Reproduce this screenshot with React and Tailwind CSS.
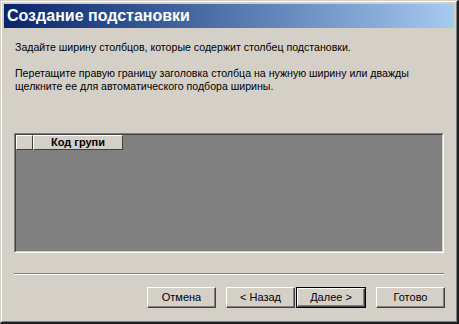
import React from 'react';

const font = { fontFamily: '"Liberation Sans", Arial, sans-serif' };

const Button = ({ children, isDefault, className = '' }) => {
  const inner = (
    <div className="h-full w-full border-t border-l border-t-white border-l-white border-r border-b border-r-[#404040] border-b-[#404040] shadow-[inset_-1px_-1px_0_#808080] flex items-center justify-center text-[11px] text-black">
      {children}
    </div>
  );
  if (isDefault) {
    return <div className={`h-[21px] border border-black ${className}`}>{inner}</div>;
  }
  return <div className={`h-[21px] ${className}`}>{inner}</div>;
};

export default function App() {
  return (
    <div
      className="w-[459px] h-[324px] bg-[#d4d0c8] border-t border-l border-t-[#d4d0c8] border-l-[#d4d0c8] border-r-2 border-b-2 border-r-[#202020] border-b-[#202020] overflow-hidden"
      style={font}
    >
      <div className="h-full border-t border-l border-t-white border-l-white border-r border-b border-r-[#808080] border-b-[#808080] p-[2px] flex flex-col">
        <div className="h-[24px] shrink-0 bg-gradient-to-r from-[#0a246a] to-[#a6caf0] flex items-center pl-[3px]">
          <span className="text-white font-bold text-[16px] leading-none">Создание подстановки</span>
        </div>

        <div className="flex flex-col px-[10px]">
          <p className="mt-[13px] ml-[1px] text-[10.6px] leading-[13px] text-black">
            Задайте ширину столбцов, которые содержит столбец подстановки.
          </p>
          <p className="mt-[13px] ml-[1px] text-[10.6px] leading-[13px] text-black">
            Перетащите правую границу заголовка столбца на нужную ширину или дважды
            <br />
            щелкните ее для автоматического подбора ширины.
          </p>

          <div className="mt-[40px] h-[120px] border-t border-l border-t-[#808080] border-l-[#808080] border-r border-b border-r-white border-b-white">
            <div className="h-full border-t border-l border-t-[#404040] border-l-[#404040] border-r border-b border-r-[#d4d0c8] border-b-[#d4d0c8] bg-[#808080]">
              <div className="flex h-[15px]">
                <div className="w-[17px] h-full bg-[#d4d0c8] border-t border-l border-t-white border-l-white border-r border-b border-r-[#404040] border-b-[#404040]" />
                <div className="w-[90px] h-full bg-[#d4d0c8] border-t border-l border-t-white border-l-white border-r border-b border-r-[#404040] border-b-[#404040] flex items-center justify-center">
                  <span className="text-[11px] font-bold leading-none text-black">Код групи</span>
                </div>
              </div>
            </div>
          </div>

          <div className="mt-[20px] h-[2px] border-t border-t-[#808080] border-b border-b-white" />
        </div>

        <div className="mt-[12px] flex justify-end pr-[9px]">
          <Button className="w-[69px]">Отмена</Button>
          <Button className="w-[69px] ml-[10px]">&lt; Назад</Button>
          <Button isDefault className="w-[70px] ml-[1px]">Далее &gt;</Button>
          <Button className="w-[69px] ml-[10px]">Готово</Button>
        </div>
      </div>
    </div>
  );
}
